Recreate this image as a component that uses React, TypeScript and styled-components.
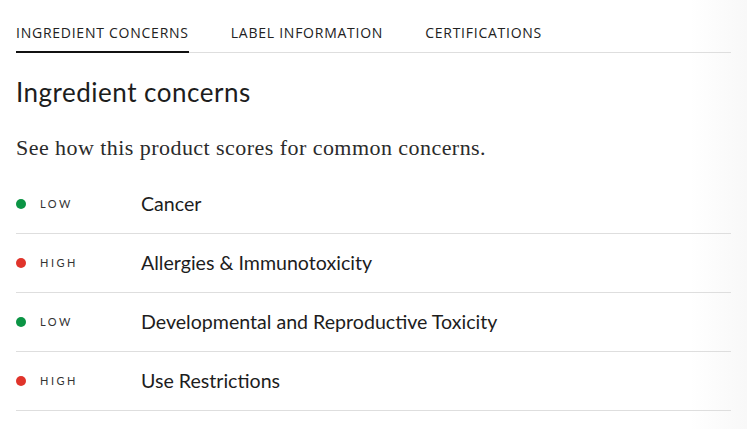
import React from "react";
import styled, { createGlobalStyle } from "styled-components";

const Global = createGlobalStyle`
  html, body { margin: 0; padding: 0; background: #fff; }
  body { font-family: "Lato", "Open Sans", sans-serif; color: #1f1f1f; }
`;

const Page = styled.div`
  width: 747px;
  height: 429px;
  box-sizing: border-box;
  padding: 0 16px;
  background: linear-gradient(to right, #fff 0, #fff 690px, #f8f8f8 747px);
  overflow: hidden;
`;

const Tabs = styled.nav`
  display: flex;
  gap: 42px;
  border-bottom: 1px solid #dedede;
  width: 715px;
`;

const Tab = styled.div<{ $active?: boolean }>`
  font-family: "Open Sans", sans-serif;
  font-size: 14px;
  letter-spacing: 0.75px;
  line-height: 20px;
  color: #222;
  padding: 23px 0 8px;
  margin-bottom: -1px;
  border-bottom: 2px solid ${(p) => (p.$active ? "#111" : "transparent")};
`;

const Heading = styled.h2`
  font-family: "Lato", sans-serif;
  font-weight: 400;
  font-size: 26px;
  letter-spacing: 0.5px;
  line-height: 32px;
  margin: 23px 0 0;
  color: #1d1d1d;
`;

const Sub = styled.p`
  font-family: "Liberation Serif", serif;
  font-size: 22px;
  letter-spacing: 0.45px;
  line-height: 28px;
  margin: 26px 0 13px;
  color: #2b2b2b;
`;

const List = styled.div`
  width: 715px;
`;

const Row = styled.div`
  display: flex;
  align-items: center;
  height: 58px;
  border-bottom: 1px solid #dedede;
`;

const Level = styled.div`
  display: flex;
  align-items: center;
  width: 125px;
  margin-top: -1px;
`;

const Dot = styled.span<{ $color: string }>`
  width: 10px;
  height: 10px;
  border-radius: 50%;
  background: ${(p) => p.$color};
  margin-right: 14px;
`;

const LevelText = styled.span`
  font-family: "Lato", sans-serif;
  font-size: 11px;
  letter-spacing: 2.5px;
  color: #333;
`;

const Concern = styled.span`
  font-family: "Lato", sans-serif;
  font-size: 19.6px;
  margin-top: -2px;
  color: #1d1d1d;
`;

const rows = [
  { level: "LOW", name: "Cancer" },
  { level: "HIGH", name: "Allergies & Immunotoxicity" },
  { level: "LOW", name: "Developmental and Reproductive Toxicity" },
  { level: "HIGH", name: "Use Restrictions" },
];

export default function App() {
  return (
    <Page>
      <Global />
      <Tabs>
        <Tab $active>INGREDIENT CONCERNS</Tab>
        <Tab>LABEL INFORMATION</Tab>
        <Tab>CERTIFICATIONS</Tab>
      </Tabs>
      <Heading>Ingredient concerns</Heading>
      <Sub>See how this product scores for common concerns.</Sub>
      <List>
        {rows.map((r) => (
          <Row key={r.name}>
            <Level>
              <Dot $color={r.level === "LOW" ? "#0b9444" : "#e0342b"} />
              <LevelText>{r.level}</LevelText>
            </Level>
            <Concern>{r.name}</Concern>
          </Row>
        ))}
      </List>
    </Page>
  );
}
